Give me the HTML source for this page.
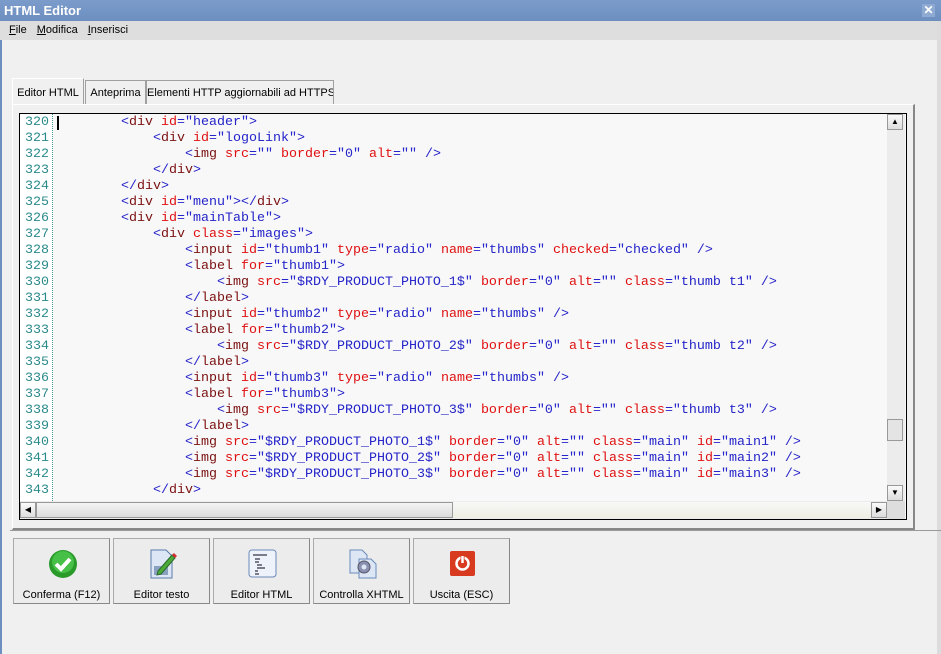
<!DOCTYPE html>
<html><head><meta charset="utf-8"><style>
*{margin:0;padding:0;box-sizing:border-box}
body{width:941px;height:654px;background:#f0f0f0;font-family:Tahoma,"Liberation Sans",sans-serif;font-size:11px;position:relative;overflow:hidden;color:#000}
.title{position:absolute;left:0;top:0;width:941px;height:21px;background:linear-gradient(#7b9ccb,#6d8fc0);color:#fff;font-weight:bold;font-size:13px;padding:3px 4px}
.close{position:absolute;right:6px;top:4px;width:13px;height:13px;background:#8faad2;color:#fff;font-size:12px;line-height:13px;text-align:center;font-weight:bold}
.menu{position:absolute;left:0;top:21px;width:937px;height:19px;background:#dedede;padding:3px 9px;font-size:11px}
.menu span{margin-right:10px}
.rb{position:absolute;left:937px;top:21px;width:4px;height:633px;background:#dcdcdc}
.lb{position:absolute;left:0;top:21px;width:2px;height:633px;background:#6d8fc0}
.tab{position:absolute;top:80px;height:24px;border:1px solid #a0a0a0;border-bottom:none;background:#f0f0f0;padding:6px 0 0;text-align:center;font-size:11px;white-space:nowrap;overflow:hidden}
.panel{position:absolute;left:12px;top:104px;width:903px;height:426px;border:1px solid #fff;border-right:2px solid #888;border-bottom:2px solid #888}
.ed{position:absolute;left:19px;top:113px;width:888px;height:407px;border:1px solid #000;background:#f8f8f8;overflow:hidden}
.gut{position:absolute;left:0;top:0;width:33px;height:387px;border-right:1px dotted #4a9a9a;background:#fff}
.code{position:absolute;left:0;top:1px;font-family:"Liberation Mono",monospace;font-size:13.33px;line-height:16px;white-space:pre;color:#000}
.n{color:#2a8a8a;display:inline-block;width:29px;text-align:right}
.b{color:#2424c8}.t{color:#7a1010}.a{color:#e01010}
.vs{position:absolute;left:867px;top:0;width:18px;height:387px;background:#ececec}
.hs{position:absolute;left:0;top:387px;width:867px;height:18px;background:#ececec}
.sb{position:absolute;width:16px;height:16px;border:1px solid #999;background:linear-gradient(#fafafa,#ddd);font-size:8px;text-align:center;line-height:14px}
.btn{position:absolute;top:538px;width:97px;height:66px;border:1px solid #aaa;border-right-color:#888;border-bottom-color:#888;background:#ececec;text-align:center;font-size:11px}
.btn .ic{position:absolute;left:34px;top:10px;width:30px;height:30px}
.btn .lbl{position:absolute;left:0;right:0;top:50px}
</style></head><body>
<div class="title">HTML Editor<div class="close">✕</div></div>
<div class="lb"></div>
<div class="menu"><span><u>F</u>ile</span><span><u>M</u>odifica</span><span><u>I</u>nserisci</span></div>
<div class="rb"></div>
<div class="tab" style="left:12px;top:78px;height:27px;width:72px;border-top-color:#fff;border-left-color:#fff;padding-top:8px">Editor HTML</div>
<div class="tab" style="left:85px;width:61px">Anteprima</div>
<div class="tab" style="left:146px;width:188px">Elementi HTTP aggiornabili ad HTTPS</div>
<div class="panel"></div>
<div class="ed">
<div class="gut"></div>
<div class="code"><span class="n">320</span>         <span class="b">&lt;</span><span class="t">div</span> <span class="a">id</span><span class="b">="header"&gt;</span>
<span class="n">321</span>             <span class="b">&lt;</span><span class="t">div</span> <span class="a">id</span><span class="b">="logoLink"&gt;</span>
<span class="n">322</span>                 <span class="b">&lt;</span><span class="t">img</span> <span class="a">src</span><span class="b">=""</span> <span class="a">border</span><span class="b">="0"</span> <span class="a">alt</span><span class="b">="" /&gt;</span>
<span class="n">323</span>             <span class="b">&lt;/</span><span class="t">div</span><span class="b">&gt;</span>
<span class="n">324</span>         <span class="b">&lt;/</span><span class="t">div</span><span class="b">&gt;</span>
<span class="n">325</span>         <span class="b">&lt;</span><span class="t">div</span> <span class="a">id</span><span class="b">="menu"&gt;&lt;/</span><span class="t">div</span><span class="b">&gt;</span>
<span class="n">326</span>         <span class="b">&lt;</span><span class="t">div</span> <span class="a">id</span><span class="b">="mainTable"&gt;</span>
<span class="n">327</span>             <span class="b">&lt;</span><span class="t">div</span> <span class="a">class</span><span class="b">="images"&gt;</span>
<span class="n">328</span>                 <span class="b">&lt;</span><span class="t">input</span> <span class="a">id</span><span class="b">="thumb1"</span> <span class="a">type</span><span class="b">="radio"</span> <span class="a">name</span><span class="b">="thumbs"</span> <span class="a">checked</span><span class="b">="checked" /&gt;</span>
<span class="n">329</span>                 <span class="b">&lt;</span><span class="t">label</span> <span class="a">for</span><span class="b">="thumb1"&gt;</span>
<span class="n">330</span>                     <span class="b">&lt;</span><span class="t">img</span> <span class="a">src</span><span class="b">="$RDY_PRODUCT_PHOTO_1$"</span> <span class="a">border</span><span class="b">="0"</span> <span class="a">alt</span><span class="b">=""</span> <span class="a">class</span><span class="b">="thumb t1" /&gt;</span>
<span class="n">331</span>                 <span class="b">&lt;/</span><span class="t">label</span><span class="b">&gt;</span>
<span class="n">332</span>                 <span class="b">&lt;</span><span class="t">input</span> <span class="a">id</span><span class="b">="thumb2"</span> <span class="a">type</span><span class="b">="radio"</span> <span class="a">name</span><span class="b">="thumbs" /&gt;</span>
<span class="n">333</span>                 <span class="b">&lt;</span><span class="t">label</span> <span class="a">for</span><span class="b">="thumb2"&gt;</span>
<span class="n">334</span>                     <span class="b">&lt;</span><span class="t">img</span> <span class="a">src</span><span class="b">="$RDY_PRODUCT_PHOTO_2$"</span> <span class="a">border</span><span class="b">="0"</span> <span class="a">alt</span><span class="b">=""</span> <span class="a">class</span><span class="b">="thumb t2" /&gt;</span>
<span class="n">335</span>                 <span class="b">&lt;/</span><span class="t">label</span><span class="b">&gt;</span>
<span class="n">336</span>                 <span class="b">&lt;</span><span class="t">input</span> <span class="a">id</span><span class="b">="thumb3"</span> <span class="a">type</span><span class="b">="radio"</span> <span class="a">name</span><span class="b">="thumbs" /&gt;</span>
<span class="n">337</span>                 <span class="b">&lt;</span><span class="t">label</span> <span class="a">for</span><span class="b">="thumb3"&gt;</span>
<span class="n">338</span>                     <span class="b">&lt;</span><span class="t">img</span> <span class="a">src</span><span class="b">="$RDY_PRODUCT_PHOTO_3$"</span> <span class="a">border</span><span class="b">="0"</span> <span class="a">alt</span><span class="b">=""</span> <span class="a">class</span><span class="b">="thumb t3" /&gt;</span>
<span class="n">339</span>                 <span class="b">&lt;/</span><span class="t">label</span><span class="b">&gt;</span>
<span class="n">340</span>                 <span class="b">&lt;</span><span class="t">img</span> <span class="a">src</span><span class="b">="$RDY_PRODUCT_PHOTO_1$"</span> <span class="a">border</span><span class="b">="0"</span> <span class="a">alt</span><span class="b">=""</span> <span class="a">class</span><span class="b">="main"</span> <span class="a">id</span><span class="b">="main1" /&gt;</span>
<span class="n">341</span>                 <span class="b">&lt;</span><span class="t">img</span> <span class="a">src</span><span class="b">="$RDY_PRODUCT_PHOTO_2$"</span> <span class="a">border</span><span class="b">="0"</span> <span class="a">alt</span><span class="b">=""</span> <span class="a">class</span><span class="b">="main"</span> <span class="a">id</span><span class="b">="main2" /&gt;</span>
<span class="n">342</span>                 <span class="b">&lt;</span><span class="t">img</span> <span class="a">src</span><span class="b">="$RDY_PRODUCT_PHOTO_3$"</span> <span class="a">border</span><span class="b">="0"</span> <span class="a">alt</span><span class="b">=""</span> <span class="a">class</span><span class="b">="main"</span> <span class="a">id</span><span class="b">="main3" /&gt;</span>
<span class="n">343</span>             <span class="b">&lt;/</span><span class="t">div</span><span class="b">&gt;</span></div>
<div style="position:absolute;left:37px;top:2px;width:2px;height:14px;background:#000"></div>
<div class="vs">
<div class="sb" style="left:0;top:0">▲</div>
<div class="sb" style="left:0;top:305px;height:22px;background:#e4e4e4"></div>
<div class="sb" style="left:0;top:371px">▼</div>
</div>
<div class="hs">
<div class="sb" style="left:0;top:1px">◀</div>
<div class="sb" style="left:16px;top:1px;width:417px;background:linear-gradient(#f4f4f4,#dcdcdc)"></div>
<div style="position:absolute;left:433px;top:1px;width:418px;height:16px;background:linear-gradient(#f8f8f8,#eeeee4)"></div>
<div class="sb" style="left:851px;top:1px">▶</div>
</div>
<div style="position:absolute;left:867px;top:387px;width:18px;height:18px;background:#ddd"></div>
</div>
<div style="position:absolute;left:10px;top:530px;width:931px;height:1px;background:#999"></div>

<div class="btn" style="left:13px"><svg class="ic" viewBox="0 0 30 30"><circle cx="15" cy="15" r="14" fill="#2a9a2a"/><circle cx="15" cy="13" r="11" fill="#46c046"/><path d="M8 15l5 5 9-10" stroke="#fff" stroke-width="4" fill="none"/></svg><div class="lbl">Conferma (F12)</div></div>
<div class="btn" style="left:113px"><svg class="ic" viewBox="0 0 30 30"><path d="M3 1h15l6 6v22H3z" fill="#dde6f4" stroke="#5a7aaa"/><rect x="6" y="17" width="14" height="9" fill="#8aa0c0"/><path d="M10 22l14-16 3 3-14 16-4 1z" fill="#4caa3a" stroke="#2a6a2a"/><path d="M24 6l3 3 2-2-3-3z" fill="#d03030"/></svg><div class="lbl">Editor testo</div></div>
<div class="btn" style="left:213px"><svg class="ic" viewBox="0 0 30 30"><rect x="1" y="1" width="27" height="27" rx="3" fill="#eef2fa" stroke="#6a8aba"/><path d="M5 6h14M7 10h5M7 13h4M9 16h5M9 19h8M7 22h3M7 25h4" stroke="#556" stroke-width="1.5"/></svg><div class="lbl">Editor HTML</div></div>
<div class="btn" style="left:313px"><svg class="ic" viewBox="0 0 30 30"><path d="M2 1h12l5 5v18H2z" fill="#dde6f4" stroke="#6a8aba"/><path d="M11 10h12l5 5v14H11z" fill="#dde6f4" stroke="#6a8aba"/><circle cx="16" cy="18" r="6" fill="#8a90b0" stroke="#556"/><circle cx="16" cy="18" r="2.5" fill="#dde6f4"/></svg><div class="lbl">Controlla XHTML</div></div>
<div class="btn" style="left:413px"><svg class="ic" viewBox="0 0 30 30"><rect x="2" y="2" width="25" height="25" rx="2" fill="#d83a20"/><circle cx="14.5" cy="14.5" r="6" fill="none" stroke="#fff" stroke-width="2.5"/><path d="M14.5 7v8" stroke="#d83a20" stroke-width="4"/><path d="M14.5 7v7" stroke="#fff" stroke-width="2.5"/></svg><div class="lbl">Uscita (ESC)</div></div>
</body></html>
